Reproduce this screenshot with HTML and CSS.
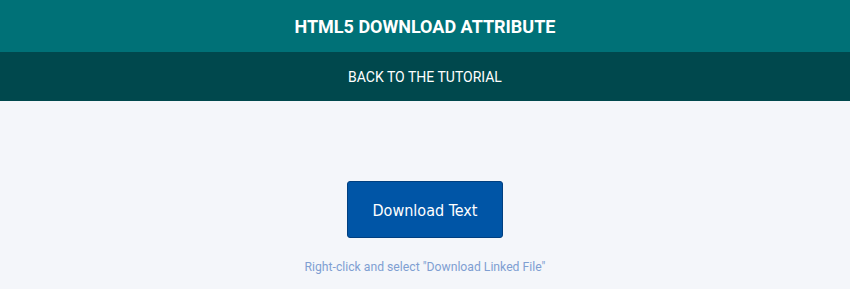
FILE: index.html
```html
<!DOCTYPE html>
<html lang="en">
<head>
  <meta charset="UTF-8">
  <title>HTML5 Download Attribute</title>
  <link rel="stylesheet" href="styles.css">
</head>
<body>
  <header class="top">
    <h1>HTML5 Download Attribute</h1>
  </header>
  <nav class="back">
    <a href="#">Back to the tutorial</a>
  </nav>
  <main class="demo">
    <a class="btn" href="#" download>Download Text</a>
    <p class="hint">Right-click and select "Download Linked File"</p>
  </main>
</body>
</html>
```

FILE: styles.css
```css
* {
  box-sizing: border-box;
  margin: 0;
  padding: 0;
}
body {
  font-family: Roboto, sans-serif;
  background: #f4f6fa;
}
.top {
  background: #007177;
  height: 52px;
  display: flex;
  align-items: center;
  justify-content: center;
}
.top h1 {
  color: #fff;
  font-size: 18px;
  font-weight: 700;
  text-transform: uppercase;
}
.back {
  background: #00484d;
  height: 49px;
  display: flex;
  align-items: center;
  justify-content: center;
}
.back a {
  color: #fff;
  text-decoration: none;
  font-size: 14px;
  text-transform: uppercase;
}
.demo {
  display: flex;
  flex-direction: column;
  align-items: center;
  padding-top: 80px;
}
.btn {
  display: flex;
  align-items: center;
  justify-content: center;
  width: 156px;
  height: 57px;
  padding-top: 1px;
  background: #0055a6;
  border: 1px solid #003f80;
  border-radius: 3px;
  color: #fff;
  font-family: "DejaVu Sans Condensed", "DejaVu Sans", sans-serif;
  font-stretch: condensed;
  font-size: 16px;
  text-decoration: none;
}
.hint {
  margin-top: 22px;
  color: #7f9fd2;
  font-size: 12.2px;
}
```
